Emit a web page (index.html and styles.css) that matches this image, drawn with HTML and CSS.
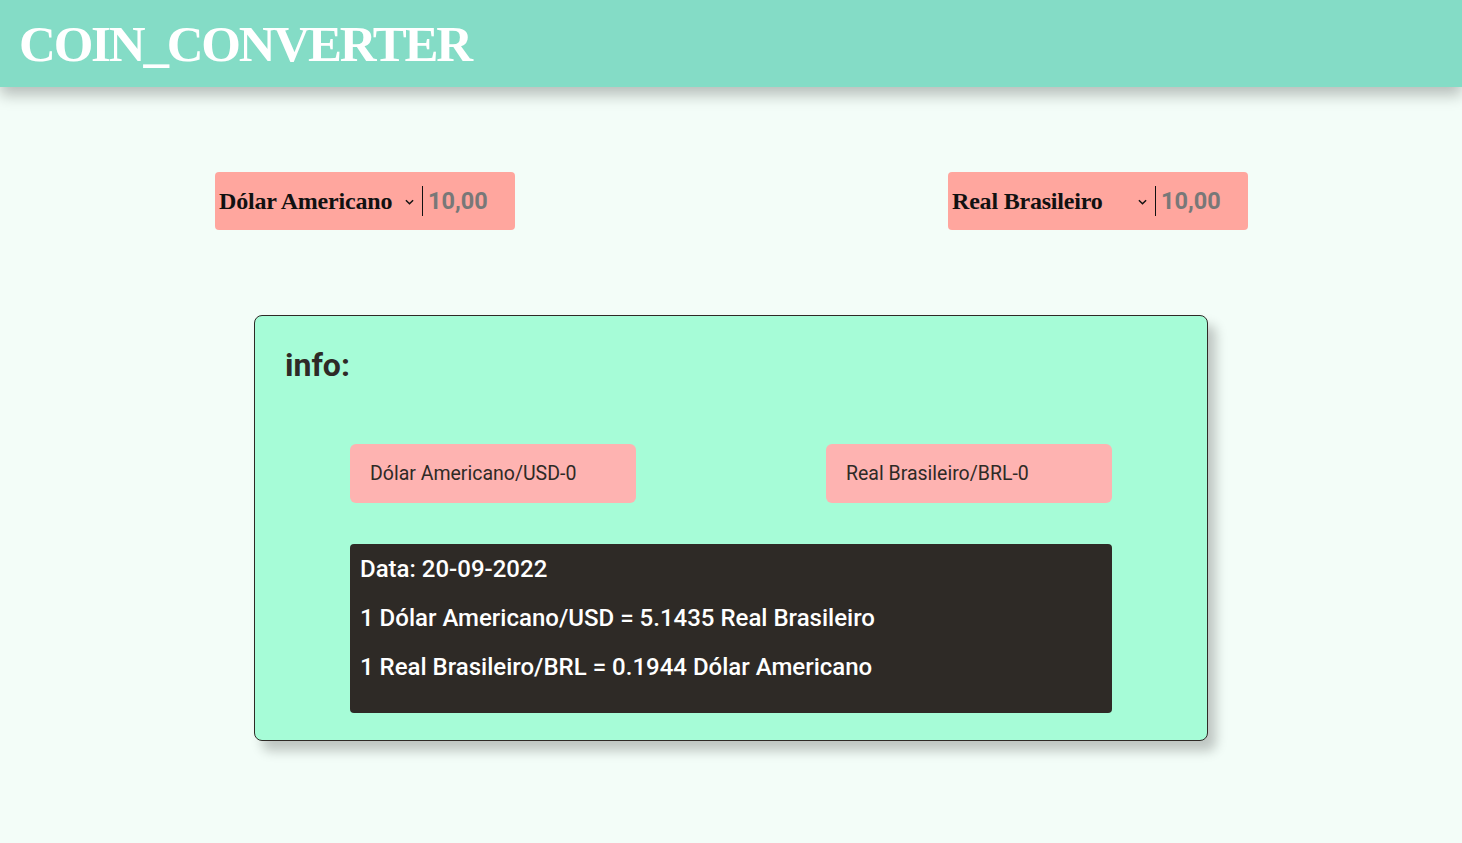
FILE: index.html
```html
<!DOCTYPE html>
<html lang="pt">
<head>
<meta charset="utf-8">
<title>Coin Converter</title>
<link rel="stylesheet" href="styles.css">
</head>
<body>
<header class="topbar">
  <h1 class="brand">COIN_CONVERTER</h1>
</header>
<main class="main">
  <section class="converters">
    <div class="conv">
      <div class="conv-select">
        <span class="conv-name">Dólar Americano</span>
        <svg class="chev" viewBox="0 0 10 6" width="9" height="6"><path d="M1 1l4 4 4-4" fill="none" stroke="#111" stroke-width="1.6"/></svg>
      </div>
      <div class="conv-value">10,00</div>
    </div>
    <div class="conv">
      <div class="conv-select">
        <span class="conv-name">Real Brasileiro</span>
        <svg class="chev" viewBox="0 0 10 6" width="9" height="6"><path d="M1 1l4 4 4-4" fill="none" stroke="#111" stroke-width="1.6"/></svg>
      </div>
      <div class="conv-value">10,00</div>
    </div>
  </section>
  <section class="card">
    <h2 class="card-title">info:</h2>
    <div class="card-inner">
      <div class="pills">
        <div class="pill">Dólar Americano/USD-0</div>
        <div class="pill">Real Brasileiro/BRL-0</div>
      </div>
      <div class="rates">
        <p>Data: 20-09-2022</p>
        <p>1 Dólar Americano/USD = 5.1435 Real Brasileiro</p>
        <p>1 Real Brasileiro/BRL = 0.1944 Dólar Americano</p>
      </div>
    </div>
  </section>
</main>
</body>
</html>
```
FILE: styles.css
```css
* { box-sizing: border-box; }
html, body { margin: 0; padding: 0; }
body {
  background: #f3fdf8;
  font-family: Roboto, "Liberation Sans", sans-serif;
  width: 1462px;
  height: 843px;
  overflow: hidden;
}
.topbar {
  height: 87px;
  background: #84dcc6;
  box-shadow: 0 8px 14px rgba(0, 0, 0, 0.25);
  display: flex;
  align-items: center;
  padding-left: 19px;
}
.brand {
  margin: 0;
  color: #fff;
  font-family: "Liberation Serif", "DejaVu Serif", serif;
  font-weight: bold;
  font-size: 51px;
  letter-spacing: -2.2px;
  line-height: 1;
  padding-top: 2px;
}
.main {
  padding-top: 85px;
}
.converters {
  display: flex;
  justify-content: space-between;
  padding: 0 214px 0 215px;
}
.conv {
  width: 300px;
  height: 58px;
  background: #ffa69e;
  border-radius: 4px;
  display: flex;
  align-items: center;
  padding-left: 4px;
}
.conv-select {
  width: 203px;
  display: flex;
  align-items: center;
  justify-content: space-between;
  padding-right: 8px;
}
.conv-name {
  font-family: "Liberation Serif", "DejaVu Serif", serif;
  font-weight: bold;
  font-size: 24px;
  color: #111;
  letter-spacing: -0.2px;
}
.chev { margin-top: 1px; }
.conv-value {
  border-left: 1.5px solid #111;
  height: 30px;
  display: flex;
  align-items: center;
  padding-left: 5px;
  font-family: Roboto, sans-serif;
  font-weight: bold;
  font-size: 23.5px;
  color: #787878;
}
.card {
  width: 954px;
  height: 426px;
  margin: 85px auto 0;
  background: #a6fcd7;
  border: 1px solid #2e2a26;
  border-radius: 8px;
  box-shadow: 8px 10px 12px rgba(0, 0, 0, 0.22);
  padding: 30px 0 0 30px;
}
.card-title {
  margin: 0;
  font-size: 32px;
  font-weight: bold;
  color: #2e2a26;
  line-height: 38px;
}
.card-inner {
  width: 762px;
  margin: 60px 0 0 65px;
}
.pills {
  display: flex;
  justify-content: space-between;
}
.pill {
  width: 286px;
  height: 59px;
  background: #feb3b1;
  border-radius: 6px;
  display: flex;
  align-items: center;
  padding-left: 20px;
  font-size: 19.5px;
  color: #2e2a26;
}
.rates {
  margin-top: 41px;
  height: 169px;
  background: #2e2a26;
  border-radius: 4px;
  padding: 11px 10px;
  color: #fff;
}
.rates p {
  margin: 0 0 21px;
  font-size: 24px;
  font-weight: 500;
  line-height: 28px;
}
```
